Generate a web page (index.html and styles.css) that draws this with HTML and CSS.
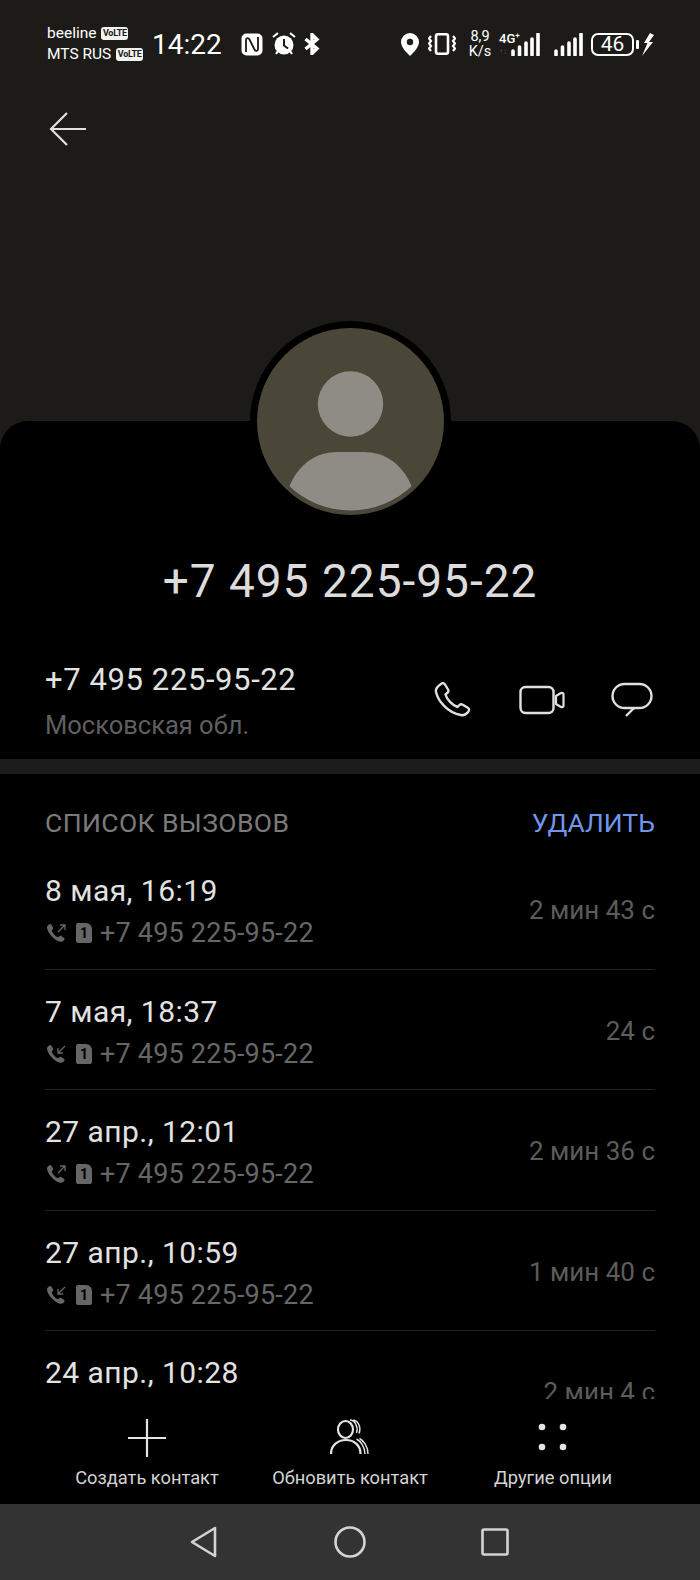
FILE: index.html
```html
<!DOCTYPE html>
<html lang="ru">
<head>
    <meta charset="UTF-8">
    <meta name="viewport" content="width=device-width, initial-scale=1.0">
    <title>Контакт</title>
    <link rel="stylesheet" href="styles.css">
</head>
<body>
    <div class="ekran">
        <header class="ust">
            <div class="durum">
                <div class="operator">
                    <div class="operator-satir">beeline <span class="volte">VoLTE</span></div>
                    <div class="operator-satir">MTS RUS <span class="volte">VoLTE</span></div>
                </div>
                <div class="saat">14:22</div>
                <svg class="ikon-nfc" width="22" height="23" viewBox="0 0 22 23">
                    <rect x="0.5" y="0.5" width="21" height="22" rx="5" fill="#fff"/>
                    <path d="M5 19V7c0-2.500 2.500-2.500 3.500-.5l5 10c1 2 3.500 2 3.500-.5V4" fill="none" stroke="#1c1b18" stroke-width="1.800"/>
                </svg>
                <svg class="ikon-alarm" width="24" height="24" viewBox="0 0 24 24">
                    <circle cx="12" cy="13" r="9.500" fill="#fff"/>
                    <path d="M12 7v6.500l4 3" fill="none" stroke="#1c1b18" stroke-width="2"/>
                    <path d="M1 5l5-4M23 5l-5-4M4 22l2-3M20 22l-2-3" stroke="#fff" stroke-width="2.200" fill="none"/>
                </svg>
                <svg class="ikon-bt" width="16" height="22" viewBox="0 0 16 22">
                    <path d="M1.500 6l11.500 9.500-5 5V1.500l5 5L1.500 16" fill="none" stroke="#fff" stroke-width="3.400"/>
                </svg>
                <svg class="ikon-konum" width="18" height="23" viewBox="0 0 18 23">
                    <path d="M9 0a9 9 0 0 1 9 9c0 5-5 10-9 14C5 19 0 14 0 9a9 9 0 0 1 9-9z" fill="#fff"/>
                    <circle cx="9" cy="9" r="3.200" fill="#1c1b18"/>
                </svg>
                <svg class="ikon-titresim" width="28" height="22" viewBox="0 0 28 22">
                    <rect x="8" y="1.300" width="12" height="19.400" rx="2" fill="none" stroke="#fff" stroke-width="2.600"/>
                    <path d="M3 3l-2 2.500 2 2.500-2 2.500 2 2.500-2 2.500 2 2.500M25 3l2 2.500-2 2.500 2 2.500-2 2.500 2 2.500-2 2.500" fill="none" stroke="#fff" stroke-width="2.200"/>
                </svg>
                <div class="hiz"><span>8,9</span><span>K/s</span></div>
                <div class="sinyal-4g">
                    <span class="dort-g">4G<sup>+</sup></span>
                    <span class="ok-gri">↑↓</span>
                    <svg class="cubuk" width="29" height="23" viewBox="0 0 29 23">
                        <path d="M2 22v-4M8.500 22v-8M15 22v-12M21 22v-16M27 22V1" stroke="#fff" stroke-width="3.600" stroke-linecap="round"/>
                    </svg>
                </div>
                <svg class="ikon-sinyal" width="29" height="23" viewBox="0 0 29 23">
                    <path d="M2 22v-4M8.500 22v-8M15 22v-12M21 22v-16M27 22V1" stroke="#fff" stroke-width="3.600" stroke-linecap="round"/>
                </svg>
                <div class="pil">46</div>
                <div class="pil-uc"></div>
                <svg class="ikon-sarj" width="12" height="23" viewBox="0 0 12 23">
                    <path d="M8 0L2 10h3.500L0 23l11-14H7l5-7z" fill="#fff"/>
                </svg>
            </div>
            <svg class="geri" width="38" height="34" viewBox="0 0 38 34">
                <path d="M18 1L2 17l16 16M2 17h35" fill="none" stroke="#e0e0e0" stroke-width="2.200"/>
            </svg>
        </header>

        <main class="kart">
            <div class="avatar">
                <svg width="187" height="187" viewBox="0 0 187 187">
                    <defs><clipPath id="yuvarlak"><circle cx="93.500" cy="93.500" r="89"/></clipPath></defs>
                    <circle cx="93.500" cy="93.500" r="93.500" fill="#4a4739"/>
                    <circle cx="93.500" cy="76" r="32.700" fill="#8e8c84"/>
                    <path d="M32 159c10-24 28-35 48-35h27c20 0 38 11 48 35-40 34-83 34-123 0z" fill="#8e8c84" clip-path="url(#yuvarlak)"/>
                </svg>
            </div>
            <h1 class="baslik">+7 495 225-95-22</h1>

            <section class="iletisim">
                <div>
                    <div class="numara">+7 495 225-95-22</div>
                    <div class="bolge">Московская обл.</div>
                </div>
                <div class="eylemler">
                    <svg class="ikon-telefon" width="38" height="36" viewBox="0 0 38 36">
                        <path d="M8 2c1.500-1.500 3-1 4 .5l3 5c.7 1.200.5 2.300-.5 3.200l-2 1.800c1.500 5 6.500 10.500 12 12.500l2-2c1-1 2.200-1 3.300-.3l5 3c1.500 1 1.700 2.800.5 4-2 2.500-4.500 4-7.500 3.300C15 31 5 19 3 10 2.300 7 5 4 8 2z" fill="none" stroke="#e0e0e0" stroke-width="2.400" stroke-linejoin="round"/>
                    </svg>
                    <svg width="47" height="30" viewBox="0 0 47 30">
                        <rect x="2.500" y="2" width="33" height="26" rx="5" fill="none" stroke="#e0e0e0" stroke-width="2.400"/>
                        <path d="M38 11l5-3c1-.5 2.500 0 2.500 1v12c0 1-1.500 1.500-2.500 1l-5-3z" fill="none" stroke="#e0e0e0" stroke-width="2.200" stroke-linejoin="round"/>
                    </svg>
                    <svg width="42" height="36" viewBox="0 0 42 36">
                        <rect x="1.500" y="2" width="39" height="24" rx="12" fill="none" stroke="#e0e0e0" stroke-width="2.400"/>
                        <path d="M23 26l-8 8" fill="none" stroke="#e0e0e0" stroke-width="2.400"/>
                    </svg>
                </div>
            </section>

            <div class="ayirac"></div>

            <div class="liste-baslik">
                <span>СПИСОК ВЫЗОВОВ</span>
                <span class="sil">УДАЛИТЬ</span>
            </div>

            <div class="liste">
                <div class="satir">
                    <div>
                        <div class="tarih">8 мая, 16:19</div>
                        <div class="alt">
                            <svg class="ikon-cagri" width="22" height="20" viewBox="0 0 22 20">
                                <path d="M3 1.500c1-1 1.800-.7 2.500.3l1.500 2.700c.4.700.3 1.300-.3 1.800l-1 1c.8 3 3.500 6 6.500 7l1-1c.6-.6 1.300-.6 2-.2l2.700 1.700c.8.600 1 1.500.3 2.300-1 1.300-2.500 2-4.200 1.700C8 17 2 10.500 1 5c-.3-1.500.800-2.500 2-3.500z" fill="#666"/>
                                <path d="M12 9l7-7M14 2h5v5" fill="none" stroke="#666" stroke-width="1.300"/>
                            </svg>
                            <span class="sim">1</span>
                            <span>+7 495 225-95-22</span>
                        </div>
                    </div>
                    <div class="sure">2 мин 43 с</div>
                </div>
                <div class="satir">
                    <div>
                        <div class="tarih">7 мая, 18:37</div>
                        <div class="alt">
                            <svg class="ikon-cagri" width="22" height="20" viewBox="0 0 22 20">
                                <path d="M3 1.500c1-1 1.800-.7 2.500.3l1.500 2.700c.4.700.3 1.300-.3 1.800l-1 1c.8 3 3.500 6 6.500 7l1-1c.6-.6 1.300-.6 2-.2l2.700 1.700c.8.600 1 1.500.3 2.300-1 1.300-2.500 2-4.200 1.700C8 17 2 10.500 1 5c-.3-1.500.800-2.500 2-3.500z" fill="#666"/>
                                <path d="M19 2l-7 7M12 4v5h5" fill="none" stroke="#666" stroke-width="1.300"/>
                            </svg>
                            <span class="sim">1</span>
                            <span>+7 495 225-95-22</span>
                        </div>
                    </div>
                    <div class="sure">24 с</div>
                </div>
                <div class="satir">
                    <div>
                        <div class="tarih">27 апр., 12:01</div>
                        <div class="alt">
                            <svg class="ikon-cagri" width="22" height="20" viewBox="0 0 22 20">
                                <path d="M3 1.500c1-1 1.800-.7 2.500.3l1.500 2.700c.4.700.3 1.300-.3 1.800l-1 1c.8 3 3.500 6 6.500 7l1-1c.6-.6 1.300-.6 2-.2l2.700 1.700c.8.600 1 1.500.3 2.300-1 1.300-2.500 2-4.200 1.700C8 17 2 10.500 1 5c-.3-1.500.800-2.500 2-3.500z" fill="#666"/>
                                <path d="M12 9l7-7M14 2h5v5" fill="none" stroke="#666" stroke-width="1.300"/>
                            </svg>
                            <span class="sim">1</span>
                            <span>+7 495 225-95-22</span>
                        </div>
                    </div>
                    <div class="sure">2 мин 36 с</div>
                </div>
                <div class="satir">
                    <div>
                        <div class="tarih">27 апр., 10:59</div>
                        <div class="alt">
                            <svg class="ikon-cagri" width="22" height="20" viewBox="0 0 22 20">
                                <path d="M3 1.500c1-1 1.800-.7 2.500.3l1.500 2.700c.4.700.3 1.300-.3 1.800l-1 1c.8 3 3.500 6 6.500 7l1-1c.6-.6 1.300-.6 2-.2l2.700 1.700c.8.600 1 1.500.3 2.300-1 1.300-2.500 2-4.200 1.700C8 17 2 10.500 1 5c-.3-1.500.800-2.500 2-3.500z" fill="#666"/>
                                <path d="M19 2l-7 7M12 4v5h5" fill="none" stroke="#666" stroke-width="1.300"/>
                            </svg>
                            <span class="sim">1</span>
                            <span>+7 495 225-95-22</span>
                        </div>
                    </div>
                    <div class="sure">1 мин 40 с</div>
                </div>
                <div class="satir">
                    <div>
                        <div class="tarih">24 апр., 10:28</div>
                    </div>
                    <div class="sure">2 мин 4 с</div>
                </div>
            </div>

            <div class="alt-menu">
                <div class="menu-oge">
                    <svg width="38" height="38" viewBox="0 0 38 38">
                        <path d="M19 0v38M0 19h38" stroke="#e4e4e4" stroke-width="2.200"/>
                    </svg>
                    <span>Создать контакт</span>
                </div>
                <div class="menu-oge">
                    <svg width="40" height="38" viewBox="0 0 40 38">
                        <ellipse cx="15.500" cy="10.500" rx="7.500" ry="8.500" fill="none" stroke="#e4e4e4" stroke-width="2.200"/>
                        <path d="M1 35C1 26 8 21 16 21s14.500 5 14.500 14" fill="none" stroke="#e4e4e4" stroke-width="2.200"/>
                        <path d="M20 1c5 0 8.500 7 6.500 13M23.500 1c5 1 8 8 5.500 13.500M26.500 20c4 2 8.500 8 8.500 15M29.500 19.500c4 2 8.500 8 8.500 15.500" fill="none" stroke="#e4e4e4" stroke-width="1.400"/>
                    </svg>
                    <span>Обновить контакт</span>
                </div>
                <div class="menu-oge">
                    <svg width="30" height="38" viewBox="0 0 30 38">
                        <circle cx="4" cy="8" r="3.300" fill="#e4e4e4"/>
                        <circle cx="25" cy="8" r="3.300" fill="#e4e4e4"/>
                        <circle cx="4" cy="28" r="3.300" fill="#e4e4e4"/>
                        <circle cx="25" cy="28" r="3.300" fill="#e4e4e4"/>
                    </svg>
                    <span>Другие опции</span>
                </div>
            </div>
        </main>

        <nav class="gezinti">
            <svg width="27" height="32" viewBox="0 0 27 32">
                <path d="M25 2v28L2 16z" fill="none" stroke="#d4d4d4" stroke-width="2.600" stroke-linejoin="round"/>
            </svg>
            <svg class="ev" width="32" height="32" viewBox="0 0 32 32">
                <circle cx="16" cy="16" r="14.500" fill="none" stroke="#d4d4d4" stroke-width="2.600"/>
            </svg>
            <svg width="28" height="28" viewBox="0 0 28 28">
                <rect x="1.500" y="1.500" width="25" height="25" rx="1.500" fill="none" stroke="#d4d4d4" stroke-width="2.600"/>
            </svg>
        </nav>
    </div>
</body>
</html>
```

FILE: styles.css
```css
html, body {
    margin: 0;
    background-color: #000;
}

.ekran {
    width: 700px;
    height: 1580px;
    display: flex;
    flex-direction: column;
    overflow: hidden;
    background: #1c1b18;
    font-family: "Roboto", "Noto Sans", sans-serif;
    color: #e6e6e6;
}

/* ust bolum */
.ust {
    height: 421px;
    flex: none;
    box-sizing: border-box;
    padding-top: 22px;
}

.durum {
    display: flex;
    align-items: center;
    height: 44px;
    padding-left: 47px;
    color: #fff;
}

.operator {
    width: 105px;
    line-height: 21px;
}

.operator-satir {
    display: flex;
    align-items: center;
    gap: 5px;
    font-size: 15.500px;
    white-space: nowrap;
}

.volte {
    background: #f2f2f2;
    color: #1c1b18;
    font-size: 9px;
    font-weight: 700;
    line-height: 13px;
    height: 13px;
    padding: 0 1.500px;
    border-radius: 3px;
    letter-spacing: -0.300px;
}

.saat {
    width: 89px;
    font-size: 28px;
}

.ikon-nfc { margin-right: 9px; }
.ikon-alarm { margin-right: 8px; }
.ikon-bt { margin-right: 81px; }
.ikon-konum { margin-right: 9px; }
.ikon-titresim { margin-right: 5px; }

.hiz {
    width: 38px;
    display: flex;
    flex-direction: column;
    align-items: center;
    font-size: 14.500px;
    line-height: 15px;
}

.sinyal-4g {
    position: relative;
    width: 41px;
    height: 23px;
}

.dort-g {
    position: absolute;
    left: 0;
    top: -2px;
    font-size: 13px;
    font-weight: 500;
    line-height: 15px;
}

.dort-g sup {
    font-size: 8px;
    line-height: 0;
}

.ok-gri {
    position: absolute;
    left: 0;
    top: 14px;
    font-size: 8px;
    line-height: 9px;
    color: #555;
}

.cubuk {
    position: absolute;
    left: 12px;
    top: 0;
}

.ikon-sinyal { margin-left: 14px; margin-right: 8px; }

.pil {
    width: 43px;
    height: 23px;
    box-sizing: border-box;
    border: 2px solid #fff;
    border-radius: 7px;
    font-size: 21px;
    line-height: 19px;
    text-align: center;
}

.pil-uc {
    width: 3px;
    height: 9px;
    margin-left: 2px;
    margin-right: 3px;
    border-radius: 1px;
    background: #fff;
}

.geri {
    display: block;
    margin: 46px 0 0 49px;
}

/* kart */
.kart {
    flex: 1;
    min-height: 0;
    display: flex;
    flex-direction: column;
    background: #000;
    border-radius: 28px 28px 0 0;
}

.avatar {
    width: 187px;
    height: 187px;
    margin: -100px auto 0;
    padding: 7px;
    border-radius: 50%;
    background: #000;
    flex: none;
}

.avatar svg {
    display: block;
}

.baslik {
    margin: 29px 0 0;
    font-size: 46px;
    font-weight: 400;
    letter-spacing: 1px;
    line-height: 60px;
    text-align: center;
    color: #dcdcdc;
}

.iletisim {
    display: flex;
    justify-content: space-between;
    align-items: flex-start;
    margin-top: 43px;
    height: 92px;
    padding: 0 47px 0 45px;
    flex: none;
}

.numara {
    font-size: 31px;
    letter-spacing: 0.600px;
    line-height: 51px;
    color: #e2e2e2;
}

.bolge {
    font-size: 25.500px;
    line-height: 40px;
    color: #5f5f5f;
}

.eylemler {
    display: flex;
    align-items: center;
    gap: 46px;
    margin-top: 28px;
}

.ikon-telefon {
    margin-right: 1px;
}

.ayirac {
    height: 15px;
    margin-top: 13px;
    background: #1c1c1c;
    flex: none;
}

.liste-baslik {
    display: flex;
    justify-content: space-between;
    margin-top: 29px;
    margin-bottom: 6px;
    padding: 0 45px;
    font-size: 26.500px;
    letter-spacing: 0.400px;
    line-height: 40px;
    color: #7a7a7a;
    flex: none;
}

.sil {
    color: #7096ea;
    letter-spacing: 0;
}

.liste {
    flex: 1;
    min-height: 0;
    overflow: hidden;
    margin: 0 45px;
}

.satir {
    height: 120.500px;
    box-sizing: border-box;
    padding-top: 22px;
    display: flex;
    justify-content: space-between;
    border-bottom: 1px solid #222;
}

.tarih {
    font-size: 30px;
    letter-spacing: 0.450px;
    line-height: 40px;
    color: #e2e2e2;
}

.alt {
    display: flex;
    align-items: center;
    gap: 8px;
    margin-top: 2px;
    font-size: 27px;
    letter-spacing: 0.200px;
    line-height: 40px;
    color: #666;
}

.ikon-cagri {
    margin-left: 1px;
}

.sim {
    width: 16px;
    height: 20px;
    border-radius: 2px 6px 2px 2px;
    background: #666;
    color: #000;
    font-size: 14px;
    font-weight: 700;
    letter-spacing: 0;
    line-height: 20px;
    text-align: center;
}

.sure {
    font-size: 26px;
    line-height: 40px;
    margin-top: 19px;
    color: #5c5c5c;
}

.alt-menu {
    height: 105px;
    flex: none;
    display: grid;
    grid-template-columns: repeat(3, 202px);
    gap: 1px;
    padding-left: 46px;
    background: #000;
}

.menu-oge {
    display: flex;
    flex-direction: column;
    align-items: center;
    padding-top: 20px;
    font-size: 18.300px;
    color: #d4d4d4;
}

.menu-oge span {
    margin-top: 9px;
    line-height: 24px;
}

/* alt gezinti */
.gezinti {
    height: 76px;
    flex: none;
    display: grid;
    grid-template-columns: 27px 32px 28px;
    column-gap: 116px;
    justify-content: start;
    align-items: center;
    padding-left: 190px;
    background: #333;
}

.ev {
    margin-left: 1px;
}
```
